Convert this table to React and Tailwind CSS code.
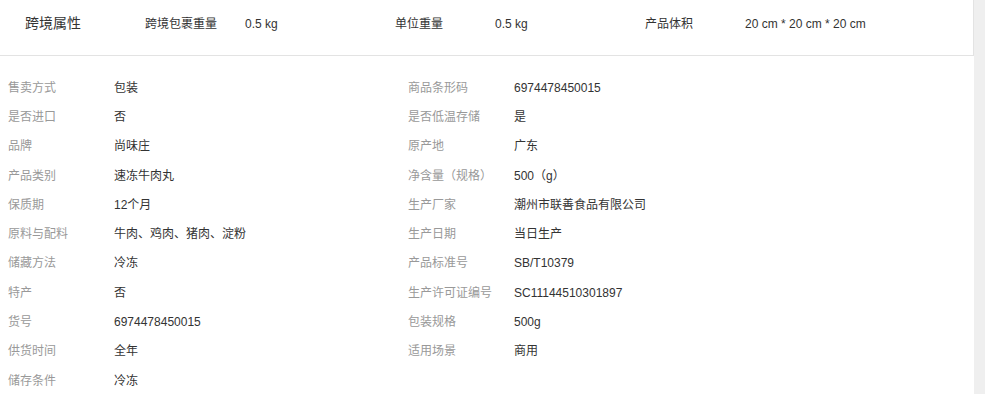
const crossBorder = [
  { label: "跨境包裹重量", value: "0.5 kg" },
  { label: "单位重量", value: "0.5 kg" },
  { label: "产品体积", value: "20 cm * 20 cm * 20 cm" },
];

const leftRows = [
  ["售卖方式", "包装"],
  ["是否进口", "否"],
  ["品牌", "尚味庄"],
  ["产品类别", "速冻牛肉丸"],
  ["保质期", "12个月"],
  ["原料与配料", "牛肉、鸡肉、猪肉、淀粉"],
  ["储藏方法", "冷冻"],
  ["特产", "否"],
  ["货号", "6974478450015"],
  ["供货时间", "全年"],
  ["储存条件", "冷冻"],
];

const rightRows = [
  ["商品条形码", "6974478450015"],
  ["是否低温存储", "是"],
  ["原产地", "广东"],
  ["净含量（规格）", "500（g）"],
  ["生产厂家", "潮州市联善食品有限公司"],
  ["生产日期", "当日生产"],
  ["产品标准号", "SB/T10379"],
  ["生产许可证编号", "SC11144510301897"],
  ["包装规格", "500g"],
  ["适用场景", "商用"],
];

function AttrRow({ label, value }) {
  return (
    <div className="flex h-[29.3px] items-center text-[12px]">
      <span className="w-[106px] shrink-0 text-[#999]">{label}</span>
      <span className="text-[#333]">{value}</span>
    </div>
  );
}

export default function App() {
  return (
    <div
      className="flex h-[394px] w-[985px] overflow-hidden bg-[#efefef]"
      style={{ fontFamily: '"Liberation Sans", "Noto Sans CJK SC", sans-serif' }}
    >
      <div className="w-[974px] shrink-0 bg-white">
        {/* ── 跨境属性 ── */}
        <div className="flex h-[56px] border-r border-b border-[#e3e3e3] pb-[8px] items-center">
          <div className="w-[145px] shrink-0 pl-[25px] text-[14px] text-[#333]">跨境属性</div>
          {crossBorder.map((item) => (
            <div key={item.label} className="flex w-[250px] shrink-0 text-[12px] text-[#333]">
              <span className="w-[100px] shrink-0">{item.label}</span>
              <span>{item.value}</span>
            </div>
          ))}
        </div>

        {/* ── 商品属性 ── */}
        <div className="flex pt-[17px] pl-[8px]">
          <div className="w-[400px] shrink-0">
            {leftRows.map(([label, value]) => (
              <AttrRow key={label} label={label} value={value} />
            ))}
          </div>
          <div className="w-[400px] shrink-0">
            {rightRows.map(([label, value]) => (
              <AttrRow key={label} label={label} value={value} />
            ))}
          </div>
        </div>
      </div>
    </div>
  );
}
